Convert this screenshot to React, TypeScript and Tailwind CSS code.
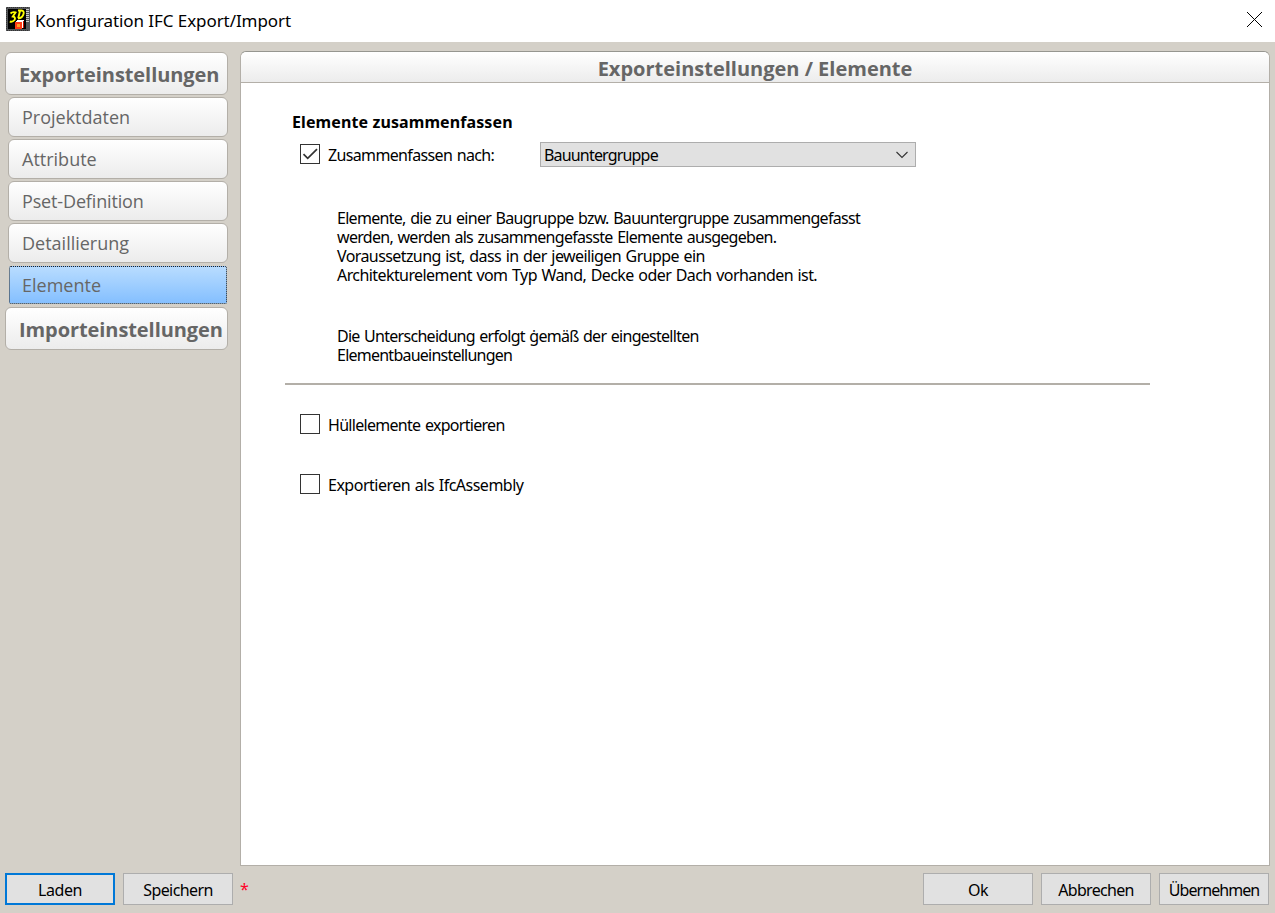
import type { ReactNode } from "react";

const sections = ["Projektdaten", "Attribute", "Pset-Definition", "Detaillierung", "Elemente"];

function AppIcon() {
  return (
    <svg width="24" height="24" viewBox="0 0 24 24" shapeRendering="crispEdges">
      <rect width="24" height="24" fill="#55575a" />
      <rect x="2" y="2" width="18" height="20" fill="#000" />
      <path d="M21.5 2v14" stroke="#c8c8c8" strokeWidth="3" strokeDasharray="1 1" />
      <path d="M.5 1v22M1 23.5h22M1 .5h22" stroke="#333" strokeDasharray="1 1" />
      <g fill="none" stroke="#ffff00" strokeWidth="1.9" shapeRendering="auto">
        <path d="M4.500 6.500Q6.500 4.500 9.500 5.500L6.800 9.500Q10 10 8.500 13Q6.500 15.500 3.800 14.500" />
        <path d="M14 4L12.200 11.300M12 3.500H15.500Q18.500 4 17.500 7Q16.500 11 12 11.500" />
      </g>
      <path d="M9 15l3-2h6v6l-3 3H9z" fill="#fff" />
      <path d="M9 15h7v7H9z" fill="#ff3c14" />
      <path d="M16.500 15l1.500-2v7l-1.500 2z" fill="#c81400" />
      <path d="M11 17h3v3h-3z" fill="#ff9c28" />
    </svg>
  );
}

function Checkbox({ label, checked = false }: { label: ReactNode; checked?: boolean }) {
  return (
    <div role="checkbox" aria-checked={checked} className="flex h-5 items-center">
      <span className="flex size-5 items-center justify-center border border-[#333] bg-white">
        {checked && (
          <svg width="18" height="18" viewBox="0 0 18 18" fill="none" stroke="#333" strokeWidth="1.7">
            <path d="M2.500 9.200L6.700 13.400L16 4.200" />
          </svg>
        )}
      </span>
      <span className="ml-2 pt-0.5 leading-5">{label}</span>
    </div>
  );
}

function Button({ children, primary = false }: { children: ReactNode; primary?: boolean }) {
  return (
    <button
      className={
        "h-8 w-[110px] bg-[#e1e1e1] pt-0.5 text-center text-base tracking-[-0.6px] whitespace-nowrap " +
        (primary ? "border-2 border-[#0078d7]" : "border border-[#adadad]")
      }
    >
      {children}
    </button>
  );
}

function GroupButton({ children }: { children: ReactNode }) {
  return (
    <button className="flex h-[43px] w-[223px] items-center rounded-md border border-[#b3afa8] bg-linear-to-b from-white to-[#ececec] pt-0.5 pl-[13px] font-['Open_Sans',sans-serif] text-xl font-bold tracking-[-0.08px] whitespace-nowrap text-[#666]">
      {children}
    </button>
  );
}

export default function App() {
  return (
    <div className="flex h-[913px] w-[1275px] flex-col overflow-hidden bg-[#d4d0c8] font-['Noto_Sans','Open_Sans',sans-serif] text-base text-black">
      <header className="flex h-[42px] shrink-0 items-start bg-white pr-[13px] pl-1.5">
        <span className="mt-[7px]"><AppIcon /></span>
        <h1 className="mt-[9px] ml-[5px] text-[17px] leading-6 tracking-[-0.08px]">Konfiguration IFC Export/Import</h1>
        <svg className="mt-3 ml-auto" width="15" height="15" viewBox="0 0 15 15" stroke="#000">
          <path d="M0 0l15 15M15 0L0 15" />
        </svg>
      </header>

      <div className="flex h-[824px] shrink-0 pt-[9px] pr-[5px] pl-[5px]">
        <nav className="flex w-[223px] flex-col items-end gap-0.5 pt-px">
          <GroupButton>Exporteinstellungen</GroupButton>
          {sections.map((name) => (
            <button
              key={name}
              className={
                "flex items-center border font-['Open_Sans',sans-serif] text-lg whitespace-nowrap text-[#666] " +
                (name === "Elemente"
                  ? "my-px mr-px h-[38px] w-[218px] rounded-xs border-dotted border-[#222] bg-linear-to-b from-[#b8dcff] to-[#84bfff] pl-3"
                  : "h-10 w-[220px] rounded-md border-[#b3afa8] bg-linear-to-b from-white to-[#ececec] pl-[13px]")
              }
            >
              <span className={name === "Pset-Definition" ? "tracking-[-0.15px]" : ""}>{name}</span>
            </button>
          ))}
          <GroupButton>Importeinstellungen</GroupButton>
        </nav>

        <main className="ml-3 flex w-[1030px] flex-col rounded-t-md border border-[#b3afa8] border-t-[#969690] bg-white">
          <h2 className="h-[31px] rounded-t-md border-b border-[#b3afa8] bg-linear-to-b from-white to-[#ececec] text-center font-['Open_Sans',sans-serif] text-xl leading-[33px] font-bold text-[#666]">
            Exporteinstellungen / Elemente
          </h2>
          <div className="pl-11">
            <h3 className="mt-[27px] ml-[7px] leading-6 font-bold tracking-[0.1px]">Elemente zusammenfassen</h3>
            <div className="mt-2 ml-[15px] flex h-[25px] items-start">
              <div className="w-60 pt-0.5">
                <Checkbox checked label={<span className="tracking-[-0.65px] [word-spacing:1px]">Zusammenfassen nach:</span>} />
              </div>
              <div role="combobox" className="flex h-[25px] w-[376px] items-center justify-between border border-[#adadad] bg-[#e1e1e1] pr-[7px] pl-[3px]">
                <span className="tracking-[-0.82px]">Bauuntergruppe</span>
                <svg width="12" height="8" viewBox="0 0 12 8" fill="none" stroke="#333" strokeWidth="1.1">
                  <path d="M.5 1l5.500 5.500L11.500 1" />
                </svg>
              </div>
            </div>
            <p className="mt-[42px] ml-[52px] leading-[19px] whitespace-nowrap [word-spacing:1px]">
              <span className="tracking-[-0.7px]">Elemente, die zu einer Baugruppe bzw. Bauuntergruppe zusammengefasst</span><br />
              <span className="tracking-[-0.7px]">werden, werden als zusammengefasste Elemente ausgegeben.</span><br />
              <span className="tracking-[-0.59px]">Voraussetzung ist, dass in der jeweiligen Gruppe ein</span><br />
              <span className="tracking-[-0.58px]">Architekturelement vom Typ Wand, Decke oder Dach vorhanden ist.</span>
            </p>
            <p className="mt-[42px] ml-[52px] leading-[19px] whitespace-nowrap [word-spacing:1px]">
              <span className="tracking-[-0.72px]">Die Unterscheidung erfolgt ġemäß der eingestellten</span><br />
              <span className="tracking-[-0.76px]">Elementbaueinstellungen</span>
            </p>
            <hr className="mt-[18px] w-[865px] border-t-2 border-[#b3afa8]" />
            <div className="mt-[29px] ml-[15px] flex flex-col gap-10">
              <Checkbox label={<span className="tracking-[-0.7px] [word-spacing:1px]">Hüllelemente exportieren</span>} />
              <Checkbox label={<span className="tracking-[-0.5px] [word-spacing:1px]">Exportieren als IfcAssembly</span>} />
            </div>
          </div>
        </main>
      </div>

      <footer className="flex items-start gap-2 pt-[7px] pr-1.5 pl-[5px]">
        <Button primary><span className="tracking-[-0.4px]">Laden</span></Button>
        <Button>Speichern</Button>
        <span className="mr-auto -ml-px pt-1 text-[#ff0028]">*</span>
        <Button>Ok</Button>
        <Button><span className="tracking-[-0.7px]">Abbrechen</span></Button>
        <Button><span className="tracking-[-0.95px]">Übernehmen</span></Button>
      </footer>
    </div>
  );
}
